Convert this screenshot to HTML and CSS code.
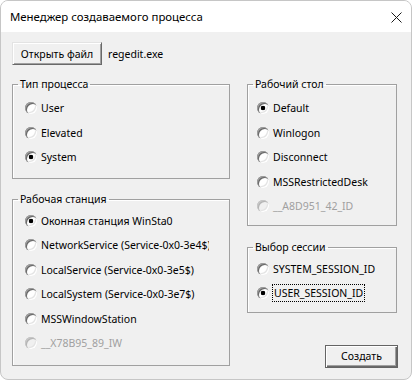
FILE: index.html
```html
<!DOCTYPE html>
<html>
<head>
  <meta charset="UTF-8">
  <title>Менеджер создаваемого процесса</title>
  <link rel="stylesheet" href="styles.css">
</head>
<body>
  <div class="window">
    <div class="titlebar">
      <span class="title">Менеджер создаваемого процесса</span>
      <svg class="close-icon" width="11" height="11" viewBox="0 0 11 11">
        <path d="M0.5 0.5 L10.5 10.5 M10.5 0.5 L0.5 10.5" stroke="#1a1a1a" stroke-width="1" fill="none"/>
      </svg>
    </div>

    <div class="client">
      <div class="file-row">
        <button class="btn btn-open">Открыть файл</button>
        <span class="file-name">regedit.exe</span>
      </div>

      <div class="columns">
        <div class="col col-left">
          <fieldset class="group">
            <legend>Тип процесса</legend>
            <div class="options options-type">
              <label class="radio"><span class="mark"></span>User</label>
              <label class="radio"><span class="mark"></span>Elevated</label>
              <label class="radio"><span class="mark on"></span>System</label>
            </div>
          </fieldset>

          <fieldset class="group group-station">
            <legend>Рабочая станция</legend>
            <div class="options options-station">
              <label class="radio"><span class="mark on"></span>Оконная станция WinSta0</label>
              <label class="radio"><span class="mark"></span>NetworkService (Service-0x0-3e4$)</label>
              <label class="radio"><span class="mark"></span>LocalService (Service-0x0-3e5$)</label>
              <label class="radio"><span class="mark"></span>LocalSystem (Service-0x0-3e7$)</label>
              <label class="radio"><span class="mark"></span>MSSWindowStation</label>
              <label class="radio off"><span class="mark"></span>__X78B95_89_IW</label>
            </div>
          </fieldset>
        </div>

        <div class="col col-right">
          <fieldset class="group">
            <legend>Рабочий стол</legend>
            <div class="options options-desktop">
              <label class="radio"><span class="mark on"></span>Default</label>
              <label class="radio"><span class="mark"></span>Winlogon</label>
              <label class="radio"><span class="mark"></span>Disconnect</label>
              <label class="radio"><span class="mark"></span>MSSRestrictedDesk</label>
              <label class="radio off"><span class="mark"></span>__A8D951_42_ID</label>
            </div>
          </fieldset>

          <fieldset class="group group-session">
            <legend>Выбор сессии</legend>
            <div class="options options-session">
              <label class="radio"><span class="mark"></span>SYSTEM_SESSION_ID</label>
              <label class="radio"><span class="mark on"></span><span class="focus">USER_SESSION_ID</span></label>
            </div>
          </fieldset>

          <button class="btn btn-create">Создать</button>
        </div>
      </div>
    </div>
  </div>
</body>
</html>
```

FILE: styles.css
```css
* {
  box-sizing: border-box;
}

body {
  margin: 0;
  background: #ffffff;
  font-family: "Noto Sans", "Liberation Sans", sans-serif;
  font-size: 10.5px;
  color: #000000;
}

.window {
  width: 412px;
  height: 380px;
  border: 1px solid #c6c6c6;
  border-radius: 8px;
  overflow: hidden;
  background: #f0f0f0;
  display: flex;
  flex-direction: column;
}

/* title bar */
.titlebar {
  height: 31px;
  flex: none;
  background: #ffffff;
  display: flex;
  align-items: center;
  justify-content: space-between;
  padding: 0 9px 0 9px;
}

.title {
  font-family: "Noto Sans", sans-serif;
  font-size: 11.4px;
  color: #000000;
}

.close-icon {
  display: block;
  margin-top: 1px;
}

/* dialog body */
.client {
  flex: 1;
  padding: 10px 13px 0 11px;
}

.file-row {
  display: flex;
  align-items: center;
  gap: 6px;
}

.btn {
  font: inherit;
  color: #000000;
  height: 23px;
  padding: 0;
  background: #f0f0f0;
  border: 1px solid;
  border-color: #e3e3e3 #696969 #696969 #e3e3e3;
  box-shadow: inset 1px 1px 0 #ffffff, inset -1px -1px 0 #a0a0a0;
}

.btn-open {
  width: 90px;
}

.btn-create {
  width: 73px;
  margin-top: 32px;
  margin-right: -1px;
  align-self: flex-end;
  border-color: #646464;
  box-shadow: inset 1px 1px 0 #ffffff, inset -1px -1px 0 #696969, inset -2px -2px 0 #a0a0a0;
}

.columns {
  display: flex;
  gap: 17px;
  margin-top: 13px;
}

.col {
  display: flex;
  flex-direction: column;
}

.col-left {
  width: 218px;
}

.col-right {
  width: 150px;
}

/* group boxes */
.group {
  margin: 0;
  padding: 0;
  min-inline-size: 0;
  border: 1px solid #a0a0a0;
  box-shadow: inset 1px 1px 0 #ffffff;
}

.group legend {
  margin-left: 5px;
  padding: 0 2px;
  line-height: 13px;
}

.group-station {
  margin-top: 14px;
}

.group-session {
  margin-top: 15px;
}

.options {
  display: flex;
  flex-direction: column;
}

.options-type {
  padding: 5px 0 8px 12px;
}

.options-station {
  padding: 3px 0 9px 12px;
}

.options-desktop {
  padding: 5px 0 6px 9px;
}

.options-session {
  padding: 3px 0 6px 9px;
}

/* radio buttons */
.radio {
  display: flex;
  align-items: center;
  gap: 4px;
  height: 24.5px;
  white-space: nowrap;
  overflow: hidden;
}

.col-left .radio {
  width: 184px;
}

.mark {
  flex: none;
  width: 12px;
  height: 12px;
  border-radius: 50%;
  background: #ffffff;
  box-shadow: inset 1px 1px 0 #a0a0a0, inset 2px 2px 0 #696969,
              inset -1px -1px 0 #ffffff, inset -2px -2px 0 #e3e3e3;
}

.mark.on {
  background: radial-gradient(circle at 50% 50%, #000000 0 2px, #ffffff 2.6px);
}

.radio.off {
  color: #a0a0a0;
}

.radio.off .mark {
  background: #f0f0f0;
  box-shadow: inset 1px 1px 0 #c8c8c8, inset 2px 2px 0 #b4b4b4,
              inset -1px -1px 0 #ffffff, inset -2px -2px 0 #e3e3e3;
}

.focus {
  outline: 1px dotted #000000;
  outline-offset: 0;
  padding: 1px 1px;
  line-height: 14px;
}
```
